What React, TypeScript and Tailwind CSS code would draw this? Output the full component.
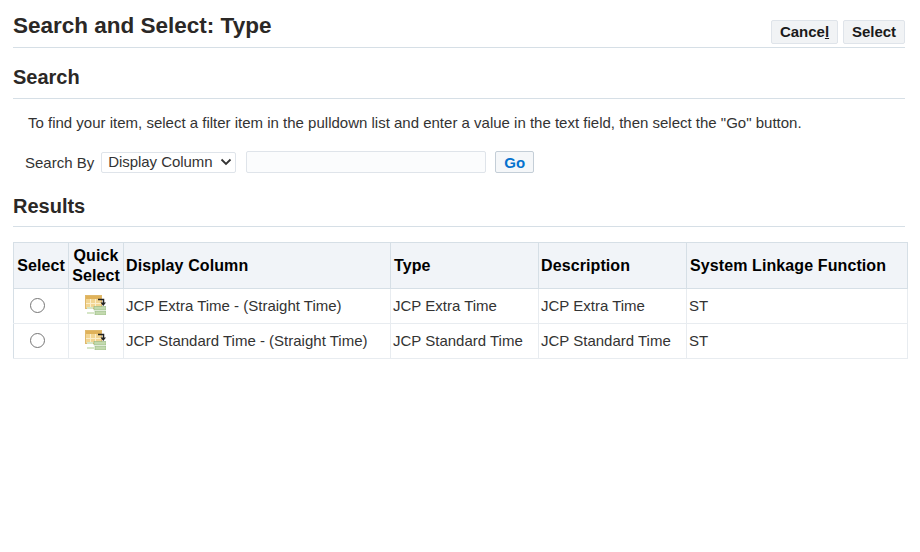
const font = { fontFamily: '"Liberation Sans", Arial, sans-serif' };

const rows = [
  { display: "JCP Extra Time - (Straight Time)", type: "JCP Extra Time", description: "JCP Extra Time", linkage: "ST" },
  { display: "JCP Standard Time - (Straight Time)", type: "JCP Standard Time", description: "JCP Standard Time", linkage: "ST" },
];

function QuickSelectIcon() {
  return (
    <svg width="21" height="20" viewBox="0 0 21 20" className="block">
      <rect x="0.5" y="0.5" width="16" height="13" fill="#f2d592" stroke="#e0b96c" />
      <rect x="1" y="1" width="15" height="3" fill="#e0b25a" />
      <path d="M5.5 4v9.5M10.5 4v9.5M1 8.5h15" stroke="#fbeecb" strokeWidth="1" />
      <path d="M13 4.5h5.5v4" fill="none" stroke="#222" strokeWidth="1.5" />
      <path d="M15.5 7.5h5.5L18.25 11z" fill="#222" />
      <rect x="9" y="11.5" width="12" height="3.5" fill="#c2d9ae" stroke="#93b87e" strokeWidth="0.6" />
      <rect x="10" y="16.5" width="11" height="3.5" fill="#c2d9ae" stroke="#93b87e" strokeWidth="0.6" />
      <rect x="2" y="12" width="6" height="2" fill="#d6e6c8" />
      <rect x="2" y="17" width="7" height="2" fill="#d6e6c8" />
    </svg>
  );
}

export default function App() {
  return (
    <div style={font} className="w-[920px] h-[552px] bg-white overflow-hidden pl-[13px] pr-[12px] text-[#333]">
      <div className="flex items-start justify-between border-b border-[#d6dfe6] h-[48px] mr-[3px] pt-[12px]">
        <h1 className="text-[22.5px] leading-[27px] font-bold text-[#2b2826]">Search and Select: Type</h1>
        <div className="flex gap-[5px] mt-[8px]">
          <button className="h-[24px] w-[67px] rounded-[2px] border border-[#dfe4ea] bg-[#f1f3f5] text-[15px] font-bold text-[#1a1a1a]">
            Cance<span className="underline">l</span>
          </button>
          <button className="h-[24px] w-[62px] rounded-[2px] border border-[#dfe4ea] bg-[#f1f3f5] text-[15px] font-bold text-[#1a1a1a]">
            Select
          </button>
        </div>
      </div>

      <h2 className="mt-[18px] mr-[3px] border-b border-[#d6dfe6] text-[20px] leading-[23px] font-bold text-[#2b2826] pb-[9px]">Search</h2>
      <p className="mt-[16px] ml-[15px] text-[15px] leading-[16px] text-[#333]">
        To find your item, select a filter item in the pulldown list and enter a value in the text field, then select the "Go" button.
      </p>
      <div className="mt-[20px] ml-[12px] flex items-center text-[15px] h-[22px]">
        <span className="pt-[2px]">Search By</span>
        <div className="ml-[7px] flex items-center justify-between h-[21px] w-[135px] border border-[#dfe4ea] rounded-[2px] pl-[6px] pr-[3px]">
          <span className="tracking-[-0.05px]">Display Column</span>
          <svg width="12" height="8" viewBox="0 0 12 8"><path d="M1.5 1.5L6 6l4.5-4.5" fill="none" stroke="#333" strokeWidth="1.8" /></svg>
        </div>
        <input className="ml-[10px] h-[22px] w-[240px] border border-[#dfe4ea] rounded-[2px] bg-[#fbfcfd]" />
        <button className="ml-[9px] h-[22px] w-[39px] border border-[#c4ced7] rounded-[2px] bg-[#f5f7f9] text-[15px] font-bold text-[#0572ce]">Go</button>
      </div>

      <h2 className="mt-[22px] mr-[3px] border-b border-[#d6dfe6] text-[20px] leading-[23px] font-bold text-[#2b2826] pb-[8px]">Results</h2>

      <table className="mt-[15px] w-[894px] table-fixed border-collapse text-[15px]">
        <colgroup>
          <col className="w-[55px]" />
          <col className="w-[55px]" />
          <col className="w-[267px]" />
          <col className="w-[148px]" />
          <col className="w-[148px]" />
          <col className="w-[221px]" />
        </colgroup>
        <thead>
          <tr className="h-[46px] bg-[#f1f4f8] text-[16px] leading-[20px] font-bold text-black tracking-[0.1px]">
            <th className="border border-[#d6dfe6] font-bold text-center">Select</th>
            <th className="border border-[#d6dfe6] font-bold text-center">Quick Select</th>
            <th className="border border-[#d6dfe6] font-bold text-left px-[2px]">Display Column</th>
            <th className="border border-[#d6dfe6] font-bold text-left px-[3px]">Type</th>
            <th className="border border-[#d6dfe6] font-bold text-left px-[2px]">Description</th>
            <th className="border border-[#d6dfe6] font-bold text-left px-[3px]">System Linkage Function</th>
          </tr>
        </thead>
        <tbody>
          {rows.map((r) => (
            <tr key={r.display} className="h-[35px] text-[#333]">
              <td className="border border-[#e8ecf0] border-l-[#d6dfe6]">
                <div className="ml-[16px] mb-[2px] h-[15px] w-[15px] rounded-full border border-[#767676] bg-white" />
              </td>
              <td className="border border-[#e8ecf0]">
                <div className="flex justify-center pr-[2px] pb-[2px]"><QuickSelectIcon /></div>
              </td>
              <td className="border border-[#e8ecf0] px-[2px]">{r.display}</td>
              <td className="border border-[#e8ecf0] px-[2px]">{r.type}</td>
              <td className="border border-[#e8ecf0] px-[2px]">{r.description}</td>
              <td className="border border-[#e8ecf0] px-[2px]">{r.linkage}</td>
            </tr>
          ))}
        </tbody>
      </table>
    </div>
  );
}
